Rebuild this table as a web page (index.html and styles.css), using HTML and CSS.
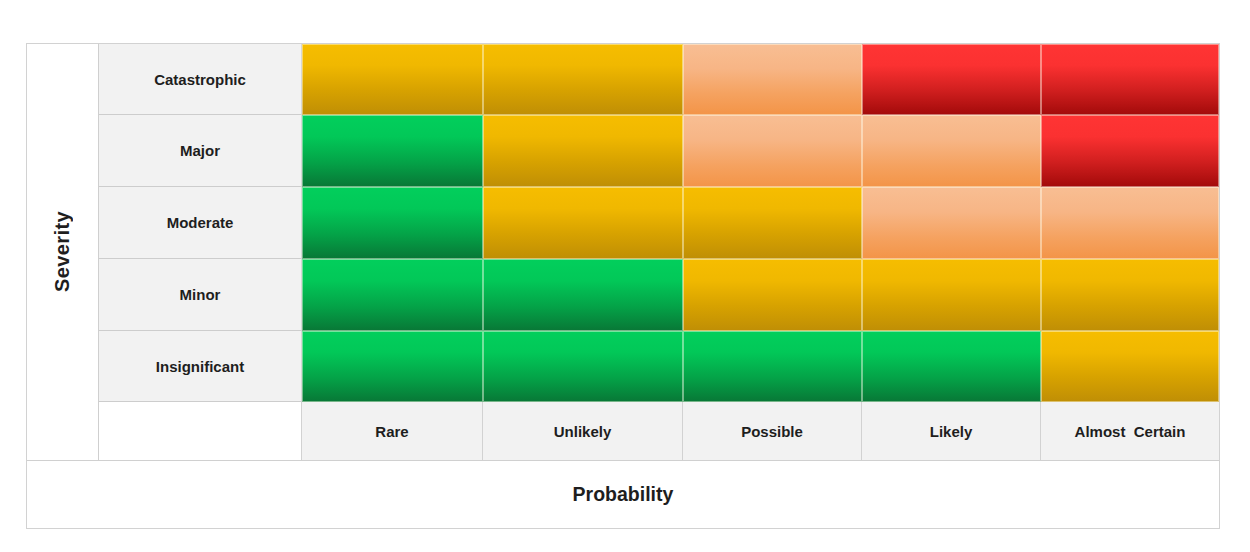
FILE: index.html
```html
<!DOCTYPE html>
<html>
<head>
<meta charset="utf-8">
<link rel="stylesheet" href="styles.css">
</head>
<body>
<div class="matrix">
  <div class="severity"><span>Severity</span></div>

  <div class="rowlabel">Catastrophic</div>
  <div class="cell y"></div><div class="cell y"></div><div class="cell p"></div><div class="cell r"></div><div class="cell r"></div>

  <div class="rowlabel">Major</div>
  <div class="cell g"></div><div class="cell y"></div><div class="cell p"></div><div class="cell p"></div><div class="cell r"></div>

  <div class="rowlabel">Moderate</div>
  <div class="cell g"></div><div class="cell y"></div><div class="cell y"></div><div class="cell p"></div><div class="cell p"></div>

  <div class="rowlabel">Minor</div>
  <div class="cell g"></div><div class="cell g"></div><div class="cell y"></div><div class="cell y"></div><div class="cell y"></div>

  <div class="rowlabel">Insignificant</div>
  <div class="cell g"></div><div class="cell g"></div><div class="cell g"></div><div class="cell g"></div><div class="cell y"></div>

  <div class="corner"></div>
  <div class="collabel">Rare</div>
  <div class="collabel">Unlikely</div>
  <div class="collabel">Possible</div>
  <div class="collabel">Likely</div>
  <div class="collabel end">Almost&nbsp; Certain</div>

  <div class="probability">Probability</div>
</div>
</body>
</html>
```

FILE: styles.css
```css
html, body {
  margin: 0;
  background: #ffffff;
}
body {
  padding: 43px 0 0 26px;
  font-family: "Liberation Sans", Arial, sans-serif;
  color: #1e1e1e;
}
.matrix {
  display: grid;
  width: 1192px;
  grid-template-columns: 72px 203px 181px 200px 179px 179px 178px;
  grid-template-rows: 71px 72px 72px 72px 71px 58px 68px;
  border: 1px solid #d2d2d2;
}
.severity {
  grid-row: 1 / 7;
  grid-column: 1;
  border-right: 1px solid #cfcfcf;
  display: flex;
  align-items: center;
  justify-content: center;
  background: #fff;
}
.severity span {
  writing-mode: vertical-rl;
  transform: rotate(180deg);
  font-size: 20px;
  font-weight: bold;
  letter-spacing: 0.4px;
}
.rowlabel {
  background: #f2f2f2;
  border-bottom: 1px solid #cdcdcd;
  border-right: 1px solid #d8d8d8;
  display: flex;
  align-items: center;
  justify-content: center;
  font-size: 15px;
  font-weight: bold;
}
.cell {
  box-shadow: inset 0 0 0 1px rgba(255, 255, 240, 0.45);
}
.y {
  background: linear-gradient(to bottom, #f6bd00 0%, #f0b800 30%, #d7a200 65%, #bf8e05 100%);
}
.g {
  background: linear-gradient(to bottom, #02cf5c 0%, #02c858 30%, #04a448 65%, #087736 100%);
}
.p {
  background: linear-gradient(to bottom, #f8be93 0%, #f7b585 35%, #f5a260 70%, #f39447 100%);
}
.r {
  background: linear-gradient(to bottom, #ff3434 0%, #fb3131 30%, #d11f1f 65%, #a20a0a 100%);
}
.corner {
  background: #fff;
  border-right: 1px solid #d2d2d2;
}
.collabel {
  background: #f2f2f2;
  border-right: 1px solid #d2d2d2;
  display: flex;
  align-items: center;
  justify-content: center;
  font-size: 15px;
  font-weight: bold;
}
.collabel.end {
  border-right: none;
}
.probability {
  grid-column: 1 / -1;
  border-top: 1px solid #d0d0d0;
  display: flex;
  align-items: center;
  justify-content: center;
  font-size: 19.5px;
  font-weight: bold;
  background: #fff;
}
```
